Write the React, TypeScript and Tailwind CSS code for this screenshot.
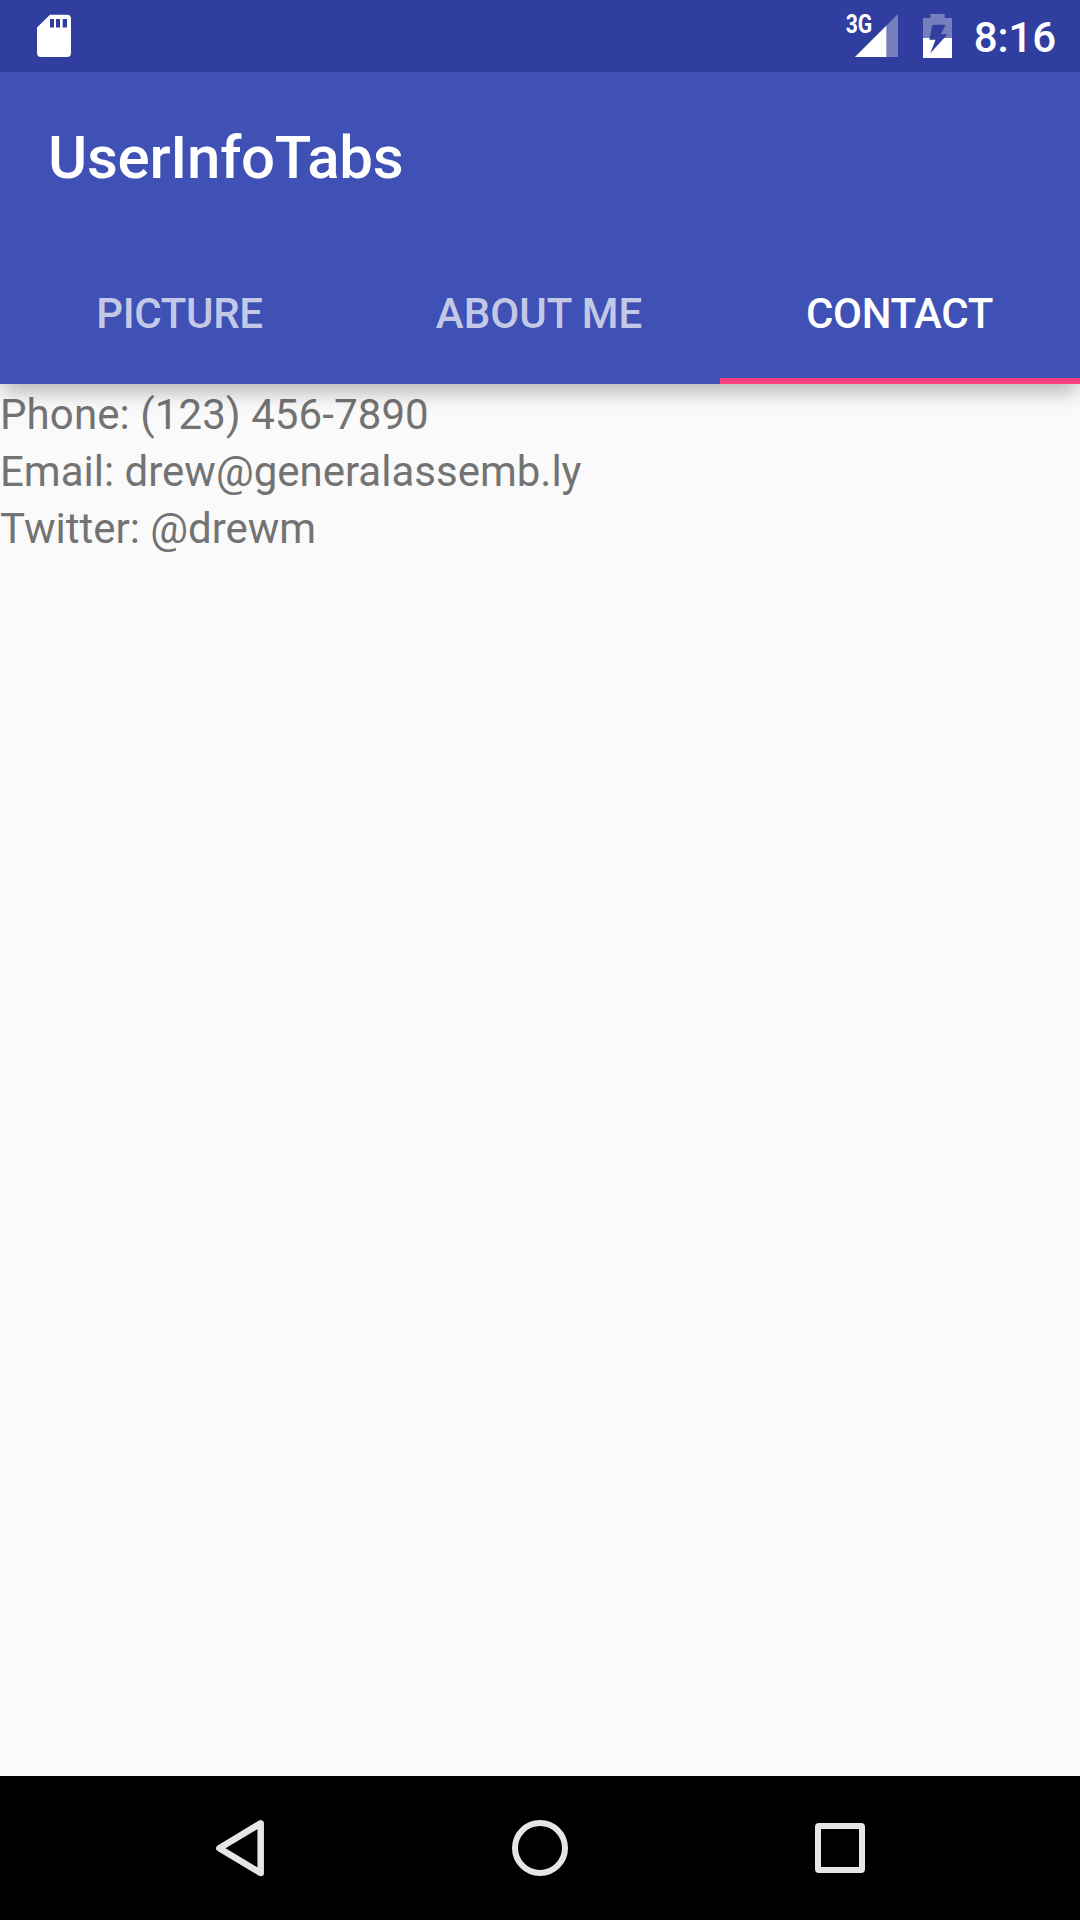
const tabs = [
  { label: "PICTURE", style: "pr-[1px] tracking-[-0.35px] text-white/70" },
  { label: "ABOUT ME", style: "pr-[2px] text-white/70" },
  { label: "CONTACT", style: "border-b-[6px] border-[#ff4081] pt-[8px] pr-[1px] tracking-[-0.3px] text-white" },
];
const lines = [
  { text: "Phone: (123) 456-7890", style: "tracking-[0.1px]" },
  { text: "Email: drew@generalassemb.ly", style: "" },
  { text: "Twitter: @drewm", style: "" },
];

export default function App() {
  return (
    <div className="flex h-[1920px] w-[1080px] flex-col overflow-hidden bg-[#fafafa] font-['Roboto',sans-serif]">
      <header className="z-10 shrink-0 bg-[#3f51b5] shadow-[0_12px_18px_-3px_rgba(0,0,0,0.25)]">
        <div className="flex h-[72px] items-center bg-[#303f9f] pr-[24px] pl-[36px] text-white">
          <svg className="h-[44px] w-[36px]" viewBox="0 0 36 44" fill="white"><path fillRule="evenodd" d="M14 .7H31Q35 .7 35 4.7V39Q35 43 31 43H5Q1 43 1 39V13.5ZM14 5V13.5H18V5ZM20 5V13.5H24V5ZM26.7 5V13.5H31V5Z" /></svg>
          <div className="flex-1" />
          <svg className="h-[72px] w-[60px]" viewBox="0 0 60 72">
            <text x="0.7" y="33.3" fill="white" fontSize="25.5" fontWeight="700" fontFamily="Roboto" textLength="26.5" lengthAdjust="spacingAndGlyphs">3G</text>
            <path d="M53 14V57H10Z" fill="#757fbd" /><path d="M41.3 25.7V57H10Z" fill="white" />
          </svg>
          <svg className="ml-[18px] h-[44px] w-[30px]" viewBox="0 0 30 44">
            <path d="M7.3 0H21.7V4H29V44H0V4H7.3Z" fill="#757fbd" />
            <path d="M0 24H29V44H0Z" fill="white" />
            <path d="M9.3 10.7H22.7L17.7 20.3H24.5L7.3 39.3L12.5 25.7H6.3Z" fill="#303f9f" />
          </svg>
          <span className="ml-[21px] pt-[2px] text-[42px] font-medium tracking-[-0.1px]">8:16</span>
        </div>
        <h1 className="flex h-[168px] items-center pt-[4px] pl-[48px] text-[60px] font-medium tracking-[-0.28px] text-white">UserInfoTabs</h1>
        <nav className="grid h-[144px] grid-cols-3">
          {tabs.map(({ label, style }) => (
            <button key={label} className={`pt-[2px] text-[42px] font-medium ${style}`}>{label}</button>
          ))}
        </nav>
      </header>
      <main className="flex-1 pt-[2px] text-[42px] leading-[57px] text-[#737373]">
        {lines.map(({ text, style }) => <p key={text} className={style}>{text}</p>)}
      </main>
      <footer className="flex h-[144px] shrink-0 items-center bg-black">
        <svg className="h-[144px] w-[1080px]" viewBox="0 0 1080 144" fill="none" stroke="#e6e6e6" strokeWidth="6" strokeLinejoin="round"><path d="M219.3 72.3L260.7 47.3V97Z" strokeWidth="6.5" /><circle cx="540" cy="72" r="25" /><rect x="818" y="50" width="44" height="44" rx="1" /></svg>
      </footer>
    </div>
  );
}
